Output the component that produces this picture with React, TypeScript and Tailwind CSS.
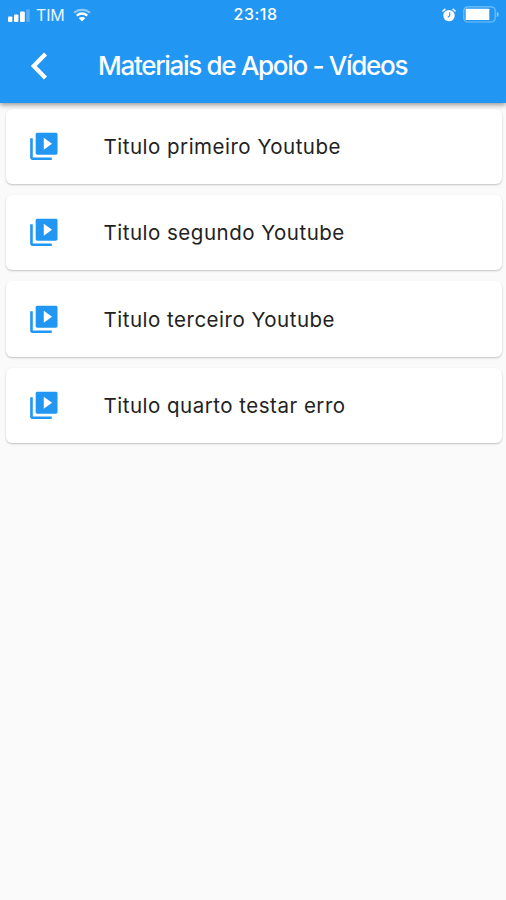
const titles = [
  "Titulo primeiro Youtube",
  "Titulo segundo Youtube",
  "Titulo terceiro Youtube",
  "Titulo quarto testar erro",
];

function SignalIcon() {
  return (
    <svg width="22" height="13" viewBox="0 0 22 13" fill="currentColor" className="shrink-0">
      <rect x="0" y="7.5" width="4.4" height="5.5" rx="1" />
      <rect x="6" y="5.5" width="4.4" height="7.5" rx="1" />
      <rect x="12" y="2.5" width="4.8" height="10.5" rx="1" />
      <rect x="18.3" y="0.3" width="3.4" height="12.7" rx="1" opacity=".25" />
    </svg>
  );
}

function WifiIcon() {
  return (
    <svg width="18" height="14" viewBox="0 0 18 14" fill="none" stroke="currentColor" className="shrink-0">
      <path d="M1 4.7C5.4 0.6 12.6 0.6 17 4.7" strokeWidth="2" opacity=".5" />
      <path d="M3.8 7.6C6.8 4.9 11.2 4.9 14.2 7.6" strokeWidth="2.5" />
      <path d="M9 13.4L5.7 10.1C7.4 8.5 10.6 8.5 12.3 10.1Z" fill="currentColor" stroke="none" />
    </svg>
  );
}

function AlarmIcon() {
  return (
    <svg width="14" height="14" viewBox="0 0 14 14" fill="none">
      <circle cx="7" cy="7.6" r="5.7" fill="#fff" />
      <path d="M0.9 3L2.8 1.3M13.1 3L11.2 1.3" stroke="#fff" strokeWidth="1.6" strokeLinecap="round" />
      <path d="M7.7 4.3V7.8L5.7 9.4" stroke="#2196f3" strokeWidth="1.1" />
    </svg>
  );
}

function BatteryIcon() {
  return (
    <svg width="36" height="17" viewBox="0 0 36 17" fill="none">
      <rect x="0.8" y="0.8" width="31.4" height="15.2" rx="4" stroke="#fff" strokeOpacity=".4" strokeWidth="1.2" />
      <rect x="2.7" y="2.7" width="23.6" height="11.3" rx="0.6" fill="#fff" />
      <path d="M33.8 5.8C36.2 6.4 36.2 10.4 33.8 11Z" fill="#fff" fillOpacity=".5" />
    </svg>
  );
}

function VideoLibraryIcon() {
  return (
    <svg width="33" height="33" viewBox="0 0 24 24" fill="#2196f3" className="shrink-0">
      <path d="M4.2 6H2.3v14.2c0 .9.7 1.6 1.6 1.6H18v-1.8H4.2V6zM21 2H7.5C6.8 2 6.3 2.5 6.3 3.2v13.6c0 .7.5 1.2 1.2 1.2H21c.7 0 1.2-.5 1.2-1.2V3.2c0-.7-.5-1.2-1.2-1.2zM12.2 14.4V5.6l6 4.4-6 4.4z" />
    </svg>
  );
}

export default function App() {
  return (
    <div className="flex h-[900px] w-[506px] flex-col bg-[#fafafa] font-['Inter','Liberation_Sans',sans-serif]">
      <header className="z-10 h-[102.5px] bg-[#2196f3] text-white shadow-[0_2px_5px_rgba(0,0,0,0.4)]">
        <div className="grid h-[30px] grid-cols-3 items-center pl-2 pr-[7px] text-[16px]">
          <div className="flex items-center">
            <SignalIcon />
            <span className="ml-[6px] mr-[9px] pb-px tracking-[-0.2px] text-white/90">TIM</span>
            <WifiIcon />
          </div>
          <div className="pb-[2px] pl-[4px] text-center font-medium tracking-[0.5px]">23:18</div>
          <div className="-mt-px flex items-center justify-end gap-[7px]">
            <AlarmIcon />
            <BatteryIcon />
          </div>
        </div>
        <div className="flex h-[71px] items-center pl-[31px]">
          <svg width="17" height="28" viewBox="0 0 17 28" fill="none" stroke="currentColor" strokeWidth="4.2">
            <path d="M14.5 2L2.8 14L14.5 26" />
          </svg>
          <h1 className="ml-[50px] text-[26px] font-medium tracking-[-1.3px]">Materiais de Apoio - Vídeos</h1>
        </div>
      </header>
      <main className="flex flex-col gap-[11px] pl-1.5 pr-1 pt-[6.2px]">
        {titles.map((title) => (
          <div
            key={title}
            className="flex h-[75.4px] items-center rounded-[6px] bg-white pl-[21px] shadow-[0_1px_2px_rgba(0,0,0,0.23)]"
          >
            <VideoLibraryIcon />
            <span className="ml-[43.5px] pt-[1.5px] text-[20.5px] tracking-[0.5px] text-[#222]">{title}</span>
          </div>
        ))}
      </main>
    </div>
  );
}
